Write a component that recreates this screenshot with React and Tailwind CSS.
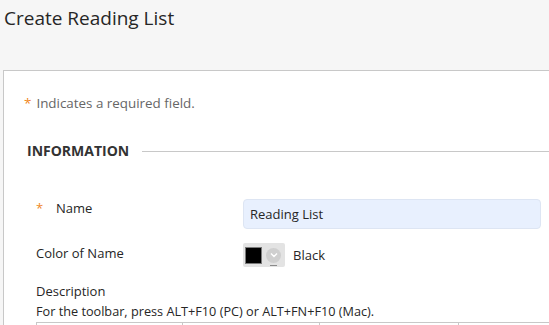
import React from "react";

const font = { fontFamily: '"Open Sans", "Liberation Sans", sans-serif' };

function Asterisk({ className = "" }) {
  return <span className={"text-[#f0871e] " + className}>*</span>;
}

function ColorPicker() {
  return (
    <div className="flex items-center w-[42px] h-[24px] bg-[#e3e3e3] rounded-[2px] pl-[2px] gap-[4px]">
      <div className="w-[17px] h-[17px] bg-black border border-[#7a7a7a]" />
      <div className="relative w-[15px] h-[15px] rounded-full bg-[#cfcfcf] flex items-center justify-center">
        <svg width="8" height="6" viewBox="0 0 8 6" fill="none">
          <path d="M1 1.5 L4 4.5 L7 1.5" stroke="#ffffff" strokeWidth="1.4" />
        </svg>
        <div className="absolute -bottom-[3px] left-[4px] w-[7px] h-[1px] bg-[#8a8a8a]" />
      </div>
    </div>
  );
}

export default function App() {
  return (
    <div
      className="w-[549px] h-[325px] overflow-hidden bg-[#f6f6f6] text-[#262626]"
      style={font}
    >
      {/* Page title */}
      <div className="h-[70px] pl-[4px] pt-[6px]">
        <h1 className="text-[19px] leading-[25px] text-[#262626]">Create Reading List</h1>
      </div>

      {/* Form panel */}
      <div className="ml-[3px] w-[620px] bg-white border border-[#c8c8c8] pt-[23px] pl-[20px]">
        <p className="text-[13.4px] leading-[18px] text-[#666666]">
          <Asterisk className="mr-[5px]" />
          Indicates a required field.
        </p>

        <div className="flex items-center mt-[29px] pl-[3px] h-[20px]">
          <h2 className="text-[14px] leading-[20px] font-bold text-[#333333]">INFORMATION</h2>
          <div className="flex-1 h-[1px] bg-[#c8c8c8] ml-[13px]" />
        </div>

        <div className="pl-[12px] text-[13px] leading-[18px]">
          {/* Name */}
          <div className="flex items-start mt-[38px]">
            <div className="w-[207px] flex">
              <Asterisk className="w-[20px]" />
              <span>Name</span>
            </div>
            <div className="w-[298px] h-[30px] rounded-[4px] bg-[#e8f0fe] border border-[#dde5f3] flex items-center pl-[6px]">
              Reading List
            </div>
          </div>

          {/* Color */}
          <div className="flex items-start mt-[14px]">
            <div className="w-[207px] pt-[1px]">Color of Name</div>
            <div className="flex items-center gap-[8px]">
              <ColorPicker />
              <span>Black</span>
            </div>
          </div>

          {/* Description */}
          <div className="mt-[15px]">Description</div>
          <div className="mt-[2px] text-[12.7px]">
            For the toolbar, press ALT+F10 (PC) or ALT+FN+F10 (Mac).
          </div>
          <div className="mt-[2px] flex border-t border-l border-[#c8c8c8] h-[30px]">
            <div className="w-[146px] border-r border-[#c8c8c8]" />
            <div className="w-[137px] border-r border-[#c8c8c8]" />
            <div className="w-[139px] border-r border-[#c8c8c8]" />
            <div className="w-[139px] border-r border-[#c8c8c8]" />
          </div>
        </div>
      </div>
    </div>
  );
}
